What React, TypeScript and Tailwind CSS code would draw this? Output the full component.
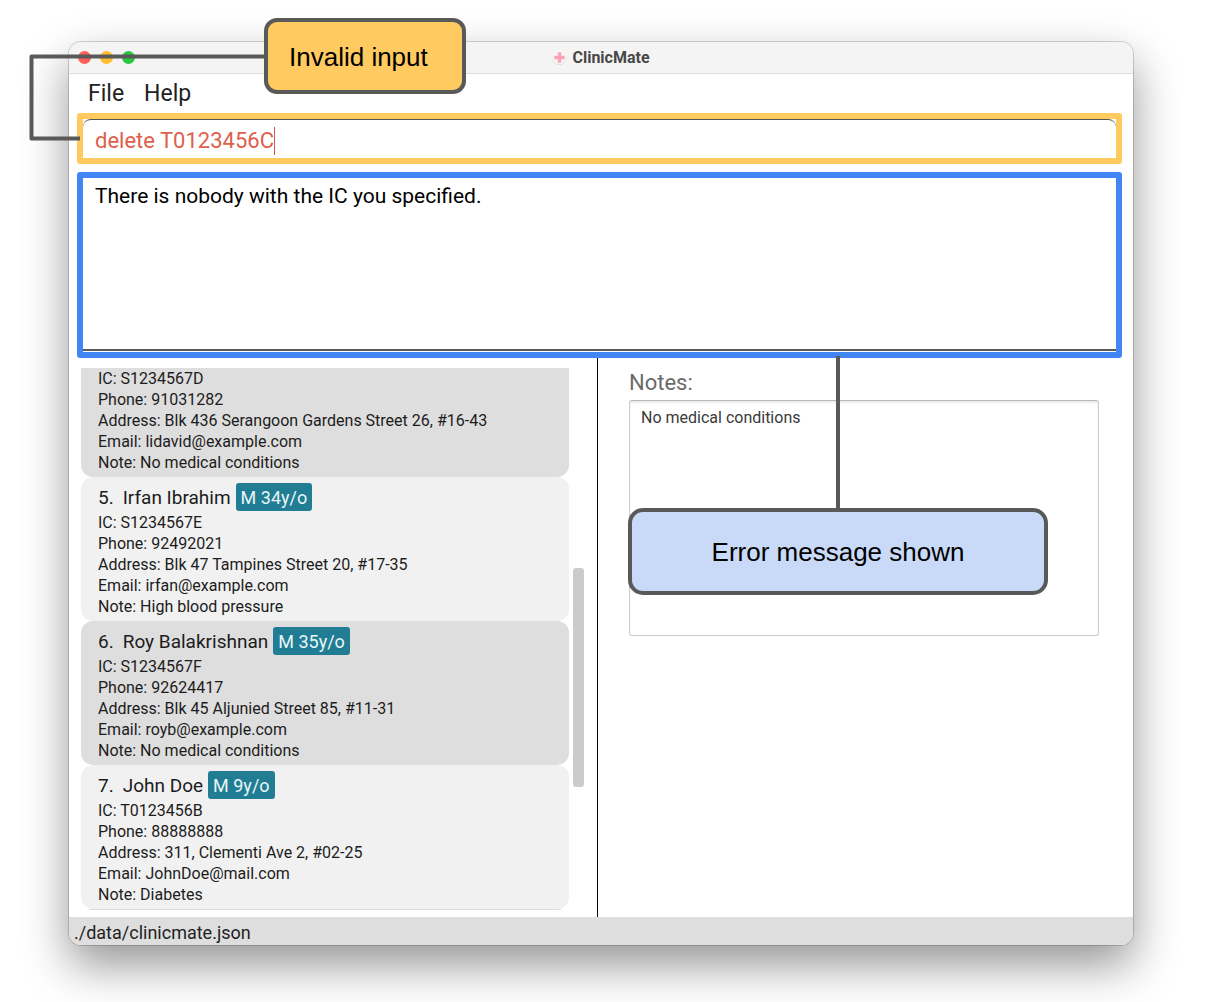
import React from "react";

type Patient = {
  index?: number;
  name?: string;
  age?: string;
  ic: string;
  phone: string;
  address: string;
  email: string;
  note: string;
};

const patients: Patient[] = [
  {
    ic: "S1234567D",
    phone: "91031282",
    address: "Blk 436 Serangoon Gardens Street 26, #16-43",
    email: "lidavid@example.com",
    note: "No medical conditions",
  },
  {
    index: 5,
    name: "Irfan Ibrahim",
    age: "M 34y/o",
    ic: "S1234567E",
    phone: "92492021",
    address: "Blk 47 Tampines Street 20, #17-35",
    email: "irfan@example.com",
    note: "High blood pressure",
  },
  {
    index: 6,
    name: "Roy Balakrishnan",
    age: "M 35y/o",
    ic: "S1234567F",
    phone: "92624417",
    address: "Blk 45 Aljunied Street 85, #11-31",
    email: "royb@example.com",
    note: "No medical conditions",
  },
  {
    index: 7,
    name: "John Doe",
    age: "M 9y/o",
    ic: "T0123456B",
    phone: "88888888",
    address: "311, Clementi Ave 2, #02-25",
    email: "JohnDoe@mail.com",
    note: "Diabetes",
  },
];

function PatientCard({ patient, shaded }: { patient: Patient; shaded: boolean }) {
  return (
    <li
      className={`px-[17px] pb-1 text-[16px] leading-[21px] text-[#1c1c1c] ${
        shaded ? "bg-[#dedede]" : "bg-[#f1f1f1]"
      } ${patient.name ? "rounded-xl pt-1.5" : "rounded-b-xl"}`}
    >
      {patient.name && (
        <div className="mb-px flex h-7 items-center gap-[5px] text-[19px]">
          <span className="mr-1">{patient.index}.</span>
          <span>{patient.name}</span>
          <span className="flex h-7 items-center rounded-[3px] bg-[#217d94] px-[5px] text-[18px] text-[#eaf6f8]">
            {patient.age}
          </span>
        </div>
      )}
      <p>IC: {patient.ic}</p>
      <p>Phone: {patient.phone}</p>
      <p>Address: {patient.address}</p>
      <p>Email: {patient.email}</p>
      <p>Note: {patient.note}</p>
    </li>
  );
}

function TitleBar() {
  return (
    <header className="flex h-8 items-center border-b border-[#dedede] bg-[#f4f4f4] px-[9px]">
      <div className="flex flex-1 gap-[9px]">
        <button aria-label="Close" className="size-[13px] rounded-full bg-[#fe5f57]" />
        <button aria-label="Minimise" className="size-[13px] rounded-full bg-[#febc2e]" />
        <button aria-label="Zoom" className="size-[13px] rounded-full bg-[#28c840]" />
      </div>
      <div className="flex items-center gap-[5px]">
        <svg width="15" height="15" viewBox="0 0 15 15" aria-hidden="true">
          <circle cx="7.5" cy="8" r="7" fill="#d9d9d9" />
          <circle cx="7.5" cy="7.3" r="7" fill="#f7f5f5" />
          <path d="M5.8 2.3h3.4v3.5h3.5v3.4H9.2v3.5H5.8V9.2H2.3V5.8h3.500z" fill="#f9a3b4" />
        </svg>
        <h1 className="text-[16px] leading-5 font-bold text-[#484848]">ClinicMate</h1>
      </div>
      <div className="flex-1" />
    </header>
  );
}

export default function App() {
  return (
    <div className="relative flex min-h-screen flex-col overflow-hidden bg-white pt-[42px] pr-[85px] pb-[57px] pl-[69px] font-['Roboto','Liberation_Sans',sans-serif]">
      <main className="flex flex-1 flex-col overflow-hidden rounded-xl bg-white shadow-[0_0_0_1px_rgba(0,0,0,0.16),0_20px_46px_rgba(0,0,0,0.42)]">
        <TitleBar />
        <nav className="flex h-[39px] items-center gap-5 px-[19px] pt-0.5 text-[23px] text-[#222]">
          <button>File</button>
          <button>Help</button>
        </nav>

        <div className="mr-[11px] ml-2 flex h-[51px] rounded-[3px] border-[6px] border-[#ffca60]">
          <div className="flex flex-1 items-end rounded-t-lg border-t border-[#555] px-3 pb-[3px]">
            <input
              aria-label="Command"
              defaultValue="delete T0123456C"
              className="field-sizing-content border-r border-[#e2553f] text-[22px] leading-7 text-[#de604b] outline-none"
            />
          </div>
        </div>

        <div className="mt-2 mr-[11px] ml-2 flex h-[186px] flex-col rounded-[3px] border-[6px] border-[#4286f5] pb-px">
          <textarea
            aria-label="Result"
            readOnly
            value="There is nobody with the IC you specified."
            className="w-full flex-1 resize-none border-b-2 border-[#5a5a5a] px-3 pt-1 text-[21px] leading-7 text-black outline-none"
          />
        </div>

        <div className="grid flex-1 grid-cols-[528fr_536fr]">
          <section aria-label="Patients" className="flex pt-2.5 pr-[13px] pl-3">
            <div className="flex-1">
              <ul>
                {patients.map((patient, i) => (
                  <PatientCard key={patient.ic} patient={patient} shaded={i % 2 === 0} />
                ))}
              </ul>
              <div className="mx-2 h-px bg-[#dedede]" />
            </div>
            <div className="ml-1 w-[11px] pt-[200px]">
              <div className="h-[219px] rounded-[3px] bg-[#cbcbcb]" />
            </div>
          </section>
          <section className="border-l border-black pt-[11px] pr-[34px] pl-[31px]">
            <label htmlFor="notes" className="block text-[22px] leading-7 text-[#6b6b6b]">
              Notes:
            </label>
            <textarea
              id="notes"
              defaultValue="No medical conditions"
              className="mt-[3px] block h-[236px] w-full resize-none rounded-[3px] border border-[#cccccc] border-t-[#b8b8b8] px-[11px] pt-1.5 text-[16px] leading-[21px] text-[#3a3a3a] shadow-[inset_0_2px_2px_rgba(0,0,0,0.08)] outline-none"
            />
          </section>
        </div>

        <footer className="h-7 bg-[#dedede] px-[5px] text-[18px] leading-8 text-[#222]">
          ./data/clinicmate.json
        </footer>
      </main>

      <svg
        className="pointer-events-none absolute top-0 left-0"
        width="1218"
        height="600"
        fill="none"
        stroke="#595959"
        strokeWidth="4"
        strokeLinejoin="round"
        aria-hidden="true"
      >
        <path d="M266 56.500H31.500V138.500H80" />
        <path d="M838 356V510" />
      </svg>
      <aside className="absolute top-[18px] left-[264px] flex h-[76px] w-[202px] items-center rounded-[13px] border-4 border-[#595959] bg-[#ffca60] pt-0.5 pl-[21px] font-['Liberation_Sans',sans-serif] text-[26px] text-black">
        Invalid input
      </aside>
      <aside className="absolute top-[508px] left-[628px] flex h-[87px] w-[420px] items-center justify-center rounded-[15px] border-4 border-[#595959] bg-[#c9daf8] pt-px font-['Liberation_Sans',sans-serif] text-[26px] text-black">
        Error message shown
      </aside>
    </div>
  );
}
